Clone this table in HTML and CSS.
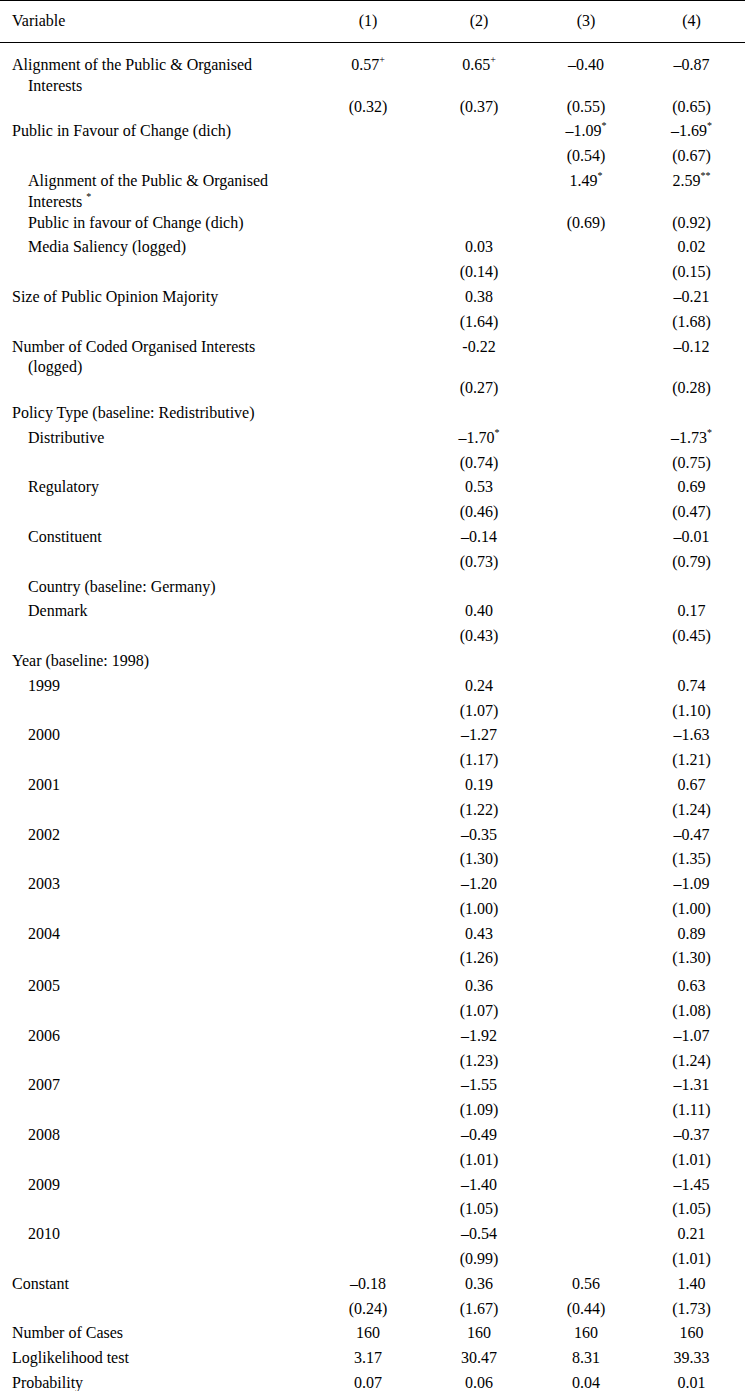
FILE: index.html
```html
<!DOCTYPE html>
<html lang="en">
<head>
<meta charset="utf-8">
<title>Regression table</title>
<link rel="stylesheet" href="styles.css">
</head>
<body>
<div class="table">
  <div class="row head">
    <div class="lab">Variable</div>
    <div class="val">(1)</div>
    <div class="val">(2)</div>
    <div class="val">(3)</div>
    <div class="val">(4)</div>
  </div>
  <div class="body">
    <div class="row">
      <div class="lab hang">Alignment of the Public &amp; Organised<br>Interests</div>
      <div class="val">0.57<sup>+</sup><br>&nbsp;<br>(0.32)</div>
      <div class="val">0.65<sup>+</sup><br>&nbsp;<br>(0.37)</div>
      <div class="val">–0.40<br>&nbsp;<br>(0.55)</div>
      <div class="val">–0.87<br>&nbsp;<br>(0.65)</div>
    </div>
    <div class="row">
      <div class="lab">Public in Favour of Change (dich)</div>
      <div class="val"></div><div class="val"></div>
      <div class="val">–1.09<sup>*</sup></div>
      <div class="val">–1.69<sup>*</sup></div>
    </div>
    <div class="row">
      <div class="lab"></div>
      <div class="val"></div><div class="val"></div>
      <div class="val">(0.54)</div>
      <div class="val">(0.67)</div>
    </div>
    <div class="row">
      <div class="lab sub">Alignment of the Public &amp; Organised<br>Interests <sup>*</sup><br>Public in favour of Change (dich)</div>
      <div class="val"></div><div class="val"></div>
      <div class="val">1.49<sup>*</sup><br>&nbsp;<br>(0.69)</div>
      <div class="val">2.59<sup>**</sup><br>&nbsp;<br>(0.92)</div>
    </div>
    <div class="row">
      <div class="lab sub">Media Saliency (logged)</div>
      <div class="val"></div>
      <div class="val">0.03</div>
      <div class="val"></div>
      <div class="val">0.02</div>
    </div>
    <div class="row">
      <div class="lab"></div><div class="val"></div>
      <div class="val">(0.14)</div><div class="val"></div>
      <div class="val">(0.15)</div>
    </div>
    <div class="row">
      <div class="lab">Size of Public Opinion Majority</div><div class="val"></div>
      <div class="val">0.38</div><div class="val"></div>
      <div class="val">–0.21</div>
    </div>
    <div class="row">
      <div class="lab"></div><div class="val"></div>
      <div class="val">(1.64)</div><div class="val"></div>
      <div class="val">(1.68)</div>
    </div>
    <div class="row">
      <div class="lab hang">Number of Coded Organised Interests<br>(logged)</div><div class="val"></div>
      <div class="val">-0.22<br>&nbsp;<br>(0.27)</div><div class="val"></div>
      <div class="val">–0.12<br>&nbsp;<br>(0.28)</div>
    </div>
    <div class="row">
      <div class="lab">Policy Type (baseline: Redistributive)</div>
      <div class="val"></div><div class="val"></div><div class="val"></div><div class="val"></div>
    </div>
    <div class="row">
      <div class="lab sub">Distributive</div><div class="val"></div>
      <div class="val">–1.70<sup>*</sup></div><div class="val"></div>
      <div class="val">–1.73<sup>*</sup></div>
    </div>
    <div class="row">
      <div class="lab"></div><div class="val"></div>
      <div class="val">(0.74)</div><div class="val"></div>
      <div class="val">(0.75)</div>
    </div>
    <div class="row">
      <div class="lab sub">Regulatory</div><div class="val"></div>
      <div class="val">0.53</div><div class="val"></div>
      <div class="val">0.69</div>
    </div>
    <div class="row">
      <div class="lab"></div><div class="val"></div>
      <div class="val">(0.46)</div><div class="val"></div>
      <div class="val">(0.47)</div>
    </div>
    <div class="row">
      <div class="lab sub">Constituent</div><div class="val"></div>
      <div class="val">–0.14</div><div class="val"></div>
      <div class="val">–0.01</div>
    </div>
    <div class="row">
      <div class="lab"></div><div class="val"></div>
      <div class="val">(0.73)</div><div class="val"></div>
      <div class="val">(0.79)</div>
    </div>
    <div class="row">
      <div class="lab sub">Country (baseline: Germany)</div>
      <div class="val"></div><div class="val"></div><div class="val"></div><div class="val"></div>
    </div>
    <div class="row">
      <div class="lab sub">Denmark</div><div class="val"></div>
      <div class="val">0.40</div><div class="val"></div>
      <div class="val">0.17</div>
    </div>
    <div class="row">
      <div class="lab"></div><div class="val"></div>
      <div class="val">(0.43)</div><div class="val"></div>
      <div class="val">(0.45)</div>
    </div>
    <div class="row">
      <div class="lab">Year (baseline: 1998)</div>
      <div class="val"></div><div class="val"></div><div class="val"></div><div class="val"></div>
    </div>
    <div class="row">
      <div class="lab sub">1999</div><div class="val"></div>
      <div class="val">0.24</div><div class="val"></div><div class="val">0.74</div>
    </div>
    <div class="row">
      <div class="lab"></div><div class="val"></div>
      <div class="val">(1.07)</div><div class="val"></div><div class="val">(1.10)</div>
    </div>
    <div class="row">
      <div class="lab sub">2000</div><div class="val"></div>
      <div class="val">–1.27</div><div class="val"></div><div class="val">–1.63</div>
    </div>
    <div class="row">
      <div class="lab"></div><div class="val"></div>
      <div class="val">(1.17)</div><div class="val"></div><div class="val">(1.21)</div>
    </div>
    <div class="row">
      <div class="lab sub">2001</div><div class="val"></div>
      <div class="val">0.19</div><div class="val"></div><div class="val">0.67</div>
    </div>
    <div class="row">
      <div class="lab"></div><div class="val"></div>
      <div class="val">(1.22)</div><div class="val"></div><div class="val">(1.24)</div>
    </div>
    <div class="row">
      <div class="lab sub">2002</div><div class="val"></div>
      <div class="val">–0.35</div><div class="val"></div><div class="val">–0.47</div>
    </div>
    <div class="row">
      <div class="lab"></div><div class="val"></div>
      <div class="val">(1.30)</div><div class="val"></div><div class="val">(1.35)</div>
    </div>
    <div class="row">
      <div class="lab sub">2003</div><div class="val"></div>
      <div class="val">–1.20</div><div class="val"></div><div class="val">–1.09</div>
    </div>
    <div class="row">
      <div class="lab"></div><div class="val"></div>
      <div class="val">(1.00)</div><div class="val"></div><div class="val">(1.00)</div>
    </div>
    <div class="row">
      <div class="lab sub">2004</div><div class="val"></div>
      <div class="val">0.43</div><div class="val"></div><div class="val">0.89</div>
    </div>
    <div class="row">
      <div class="lab"></div><div class="val"></div>
      <div class="val">(1.26)</div><div class="val"></div><div class="val">(1.30)</div>
    </div>
    <div class="row gap">
      <div class="lab sub">2005</div><div class="val"></div>
      <div class="val">0.36</div><div class="val"></div><div class="val">0.63</div>
    </div>
    <div class="row">
      <div class="lab"></div><div class="val"></div>
      <div class="val">(1.07)</div><div class="val"></div><div class="val">(1.08)</div>
    </div>
    <div class="row">
      <div class="lab sub">2006</div><div class="val"></div>
      <div class="val">–1.92</div><div class="val"></div><div class="val">–1.07</div>
    </div>
    <div class="row">
      <div class="lab"></div><div class="val"></div>
      <div class="val">(1.23)</div><div class="val"></div><div class="val">(1.24)</div>
    </div>
    <div class="row">
      <div class="lab sub">2007</div><div class="val"></div>
      <div class="val">–1.55</div><div class="val"></div><div class="val">–1.31</div>
    </div>
    <div class="row">
      <div class="lab"></div><div class="val"></div>
      <div class="val">(1.09)</div><div class="val"></div><div class="val">(1.11)</div>
    </div>
    <div class="row">
      <div class="lab sub">2008</div><div class="val"></div>
      <div class="val">–0.49</div><div class="val"></div><div class="val">–0.37</div>
    </div>
    <div class="row">
      <div class="lab"></div><div class="val"></div>
      <div class="val">(1.01)</div><div class="val"></div><div class="val">(1.01)</div>
    </div>
    <div class="row">
      <div class="lab sub">2009</div><div class="val"></div>
      <div class="val">–1.40</div><div class="val"></div><div class="val">–1.45</div>
    </div>
    <div class="row">
      <div class="lab"></div><div class="val"></div>
      <div class="val">(1.05)</div><div class="val"></div><div class="val">(1.05)</div>
    </div>
    <div class="row">
      <div class="lab sub">2010</div><div class="val"></div>
      <div class="val">–0.54</div><div class="val"></div><div class="val">0.21</div>
    </div>
    <div class="row">
      <div class="lab"></div><div class="val"></div>
      <div class="val">(0.99)</div><div class="val"></div><div class="val">(1.01)</div>
    </div>
    <div class="row">
      <div class="lab">Constant</div>
      <div class="val">–0.18</div><div class="val">0.36</div><div class="val">0.56</div><div class="val">1.40</div>
    </div>
    <div class="row">
      <div class="lab"></div>
      <div class="val">(0.24)</div><div class="val">(1.67)</div><div class="val">(0.44)</div><div class="val">(1.73)</div>
    </div>
    <div class="row">
      <div class="lab">Number of Cases</div>
      <div class="val">160</div><div class="val">160</div><div class="val">160</div><div class="val">160</div>
    </div>
    <div class="row">
      <div class="lab">Loglikelihood test</div>
      <div class="val">3.17</div><div class="val">30.47</div><div class="val">8.31</div><div class="val">39.33</div>
    </div>
    <div class="row">
      <div class="lab">Probability</div>
      <div class="val">0.07</div><div class="val">0.06</div><div class="val">0.04</div><div class="val">0.01</div>
    </div>
  </div>
</div>
</body>
</html>
```
FILE: styles.css
```css
html, body {
  margin: 0;
  padding: 0;
  background: #fff;
}
body {
  font-family: "Liberation Serif", "Times New Roman", serif;
  font-size: 16px;
  color: #000;
}
.table {
  width: 745px;
  border-top: 1px solid #000;
}
.row {
  display: grid;
  grid-template-columns: 312px 112px 110px 104px 107px;
  padding: 2px 0;
  line-height: 20.8px;
  min-height: 20.8px;
}
.head {
  height: 42px;
  box-sizing: border-box;
  padding: 10px 0 0 0;
  border-bottom: 1px solid #000;
}
.body {
  padding-top: 10px;
}
.lab {
  padding-left: 12px;
  white-space: nowrap;
}
.lab.hang {
  padding-left: 28px;
  text-indent: -16px;
}
.lab.sub {
  padding-left: 28px;
}
.val {
  text-align: center;
  white-space: nowrap;
}
.gap {
  margin-top: 3px;
}
sup {
  font-size: 10px;
  line-height: 0;
  vertical-align: 7px;
}
```
